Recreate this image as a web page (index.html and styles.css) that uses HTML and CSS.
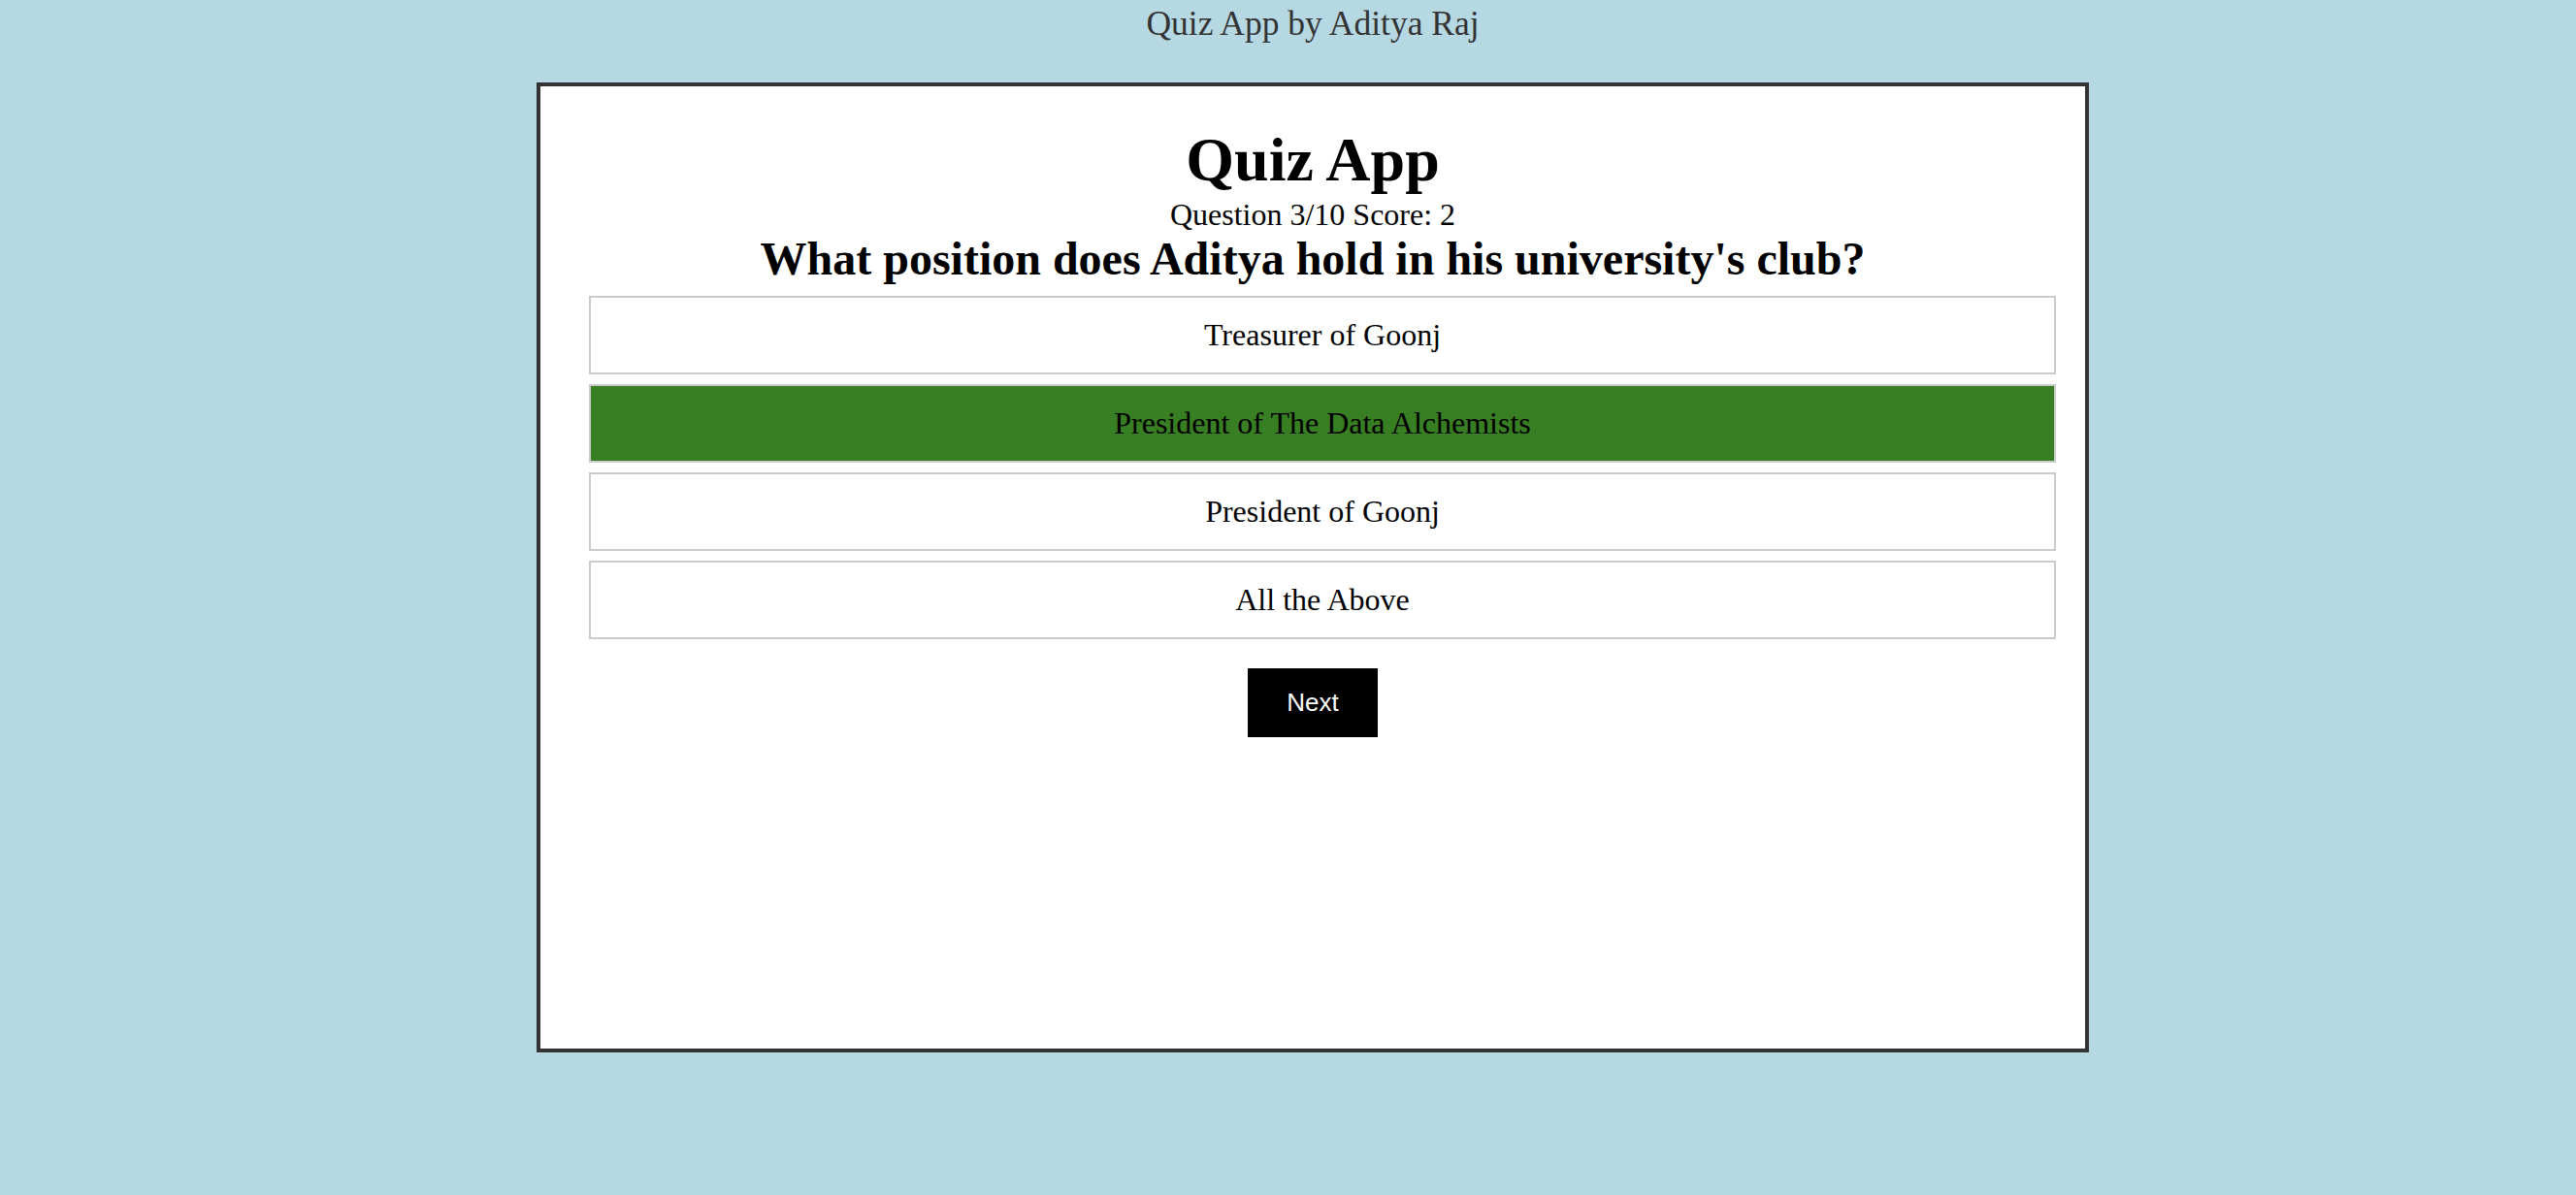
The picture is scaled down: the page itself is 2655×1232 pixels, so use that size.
FILE: index.html
```html
<!DOCTYPE html>
<html lang="en">
<head>
<meta charset="utf-8">
<title>Quiz App by Aditya Raj</title>
<link rel="stylesheet" href="styles.css">
</head>
<body>
<div class="page">
  <div class="site-title">Quiz App by Aditya Raj</div>
  <main class="card">
    <h1 class="app-title">Quiz App</h1>
    <div class="status">Question 3/10 Score: 2</div>
    <h2 class="question">What position does Aditya hold in his university's club?</h2>
    <div class="options">
      <div class="option">Treasurer of Goonj</div>
      <div class="option correct">President of The Data Alchemists</div>
      <div class="option">President of Goonj</div>
      <div class="option">All the Above</div>
    </div>
    <div class="actions">
      <button class="next-btn" type="button">Next</button>
    </div>
  </main>
</div>
</body>
</html>
```

FILE: styles.css
```css
html, body {
  margin: 0;
  padding: 0;
}

body {
  background: #b5d8e3;
  font-family: "Liberation Serif", "Times New Roman", serif;
  color: #000;
}

.page {
  padding-left: 51px;
  min-height: 1232px;
  box-sizing: border-box;
}

.site-title {
  margin-top: 2px;
  font-size: 35.5px;
  line-height: 44px;
  text-align: center;
  color: #333;
}

.card {
  width: 1600px;
  height: 1000px;
  box-sizing: border-box;
  margin: 39px auto 0;
  background: #fff;
  border: 4px solid #333;
  display: flex;
  flex-direction: column;
}

.app-title {
  margin: 38.6px 0 0;
  font-size: 64px;
  line-height: 73px;
  font-weight: bold;
  text-align: center;
}

.status {
  font-size: 32px;
  line-height: 40px;
  text-align: center;
}

.question {
  margin: 0;
  font-size: 48px;
  line-height: 52px;
  font-weight: bold;
  text-align: center;
}

.options {
  margin: 12px 30px 0 50px;
  display: flex;
  flex-direction: column;
  gap: 10px;
}

.option {
  height: 81px;
  box-sizing: border-box;
  border: 2px solid #cbcbcb;
  background: #fff;
  font-size: 32px;
  display: flex;
  align-items: center;
  justify-content: center;
}

.option.correct {
  background: #387e22;
}

.actions {
  display: flex;
  justify-content: center;
  margin-top: 30px;
}

.next-btn {
  width: 134px;
  height: 71px;
  border: none;
  background: #000;
  color: #fff;
  font-family: "Liberation Sans", Arial, sans-serif;
  font-size: 26px;
  padding: 0;
  cursor: pointer;
}
```
